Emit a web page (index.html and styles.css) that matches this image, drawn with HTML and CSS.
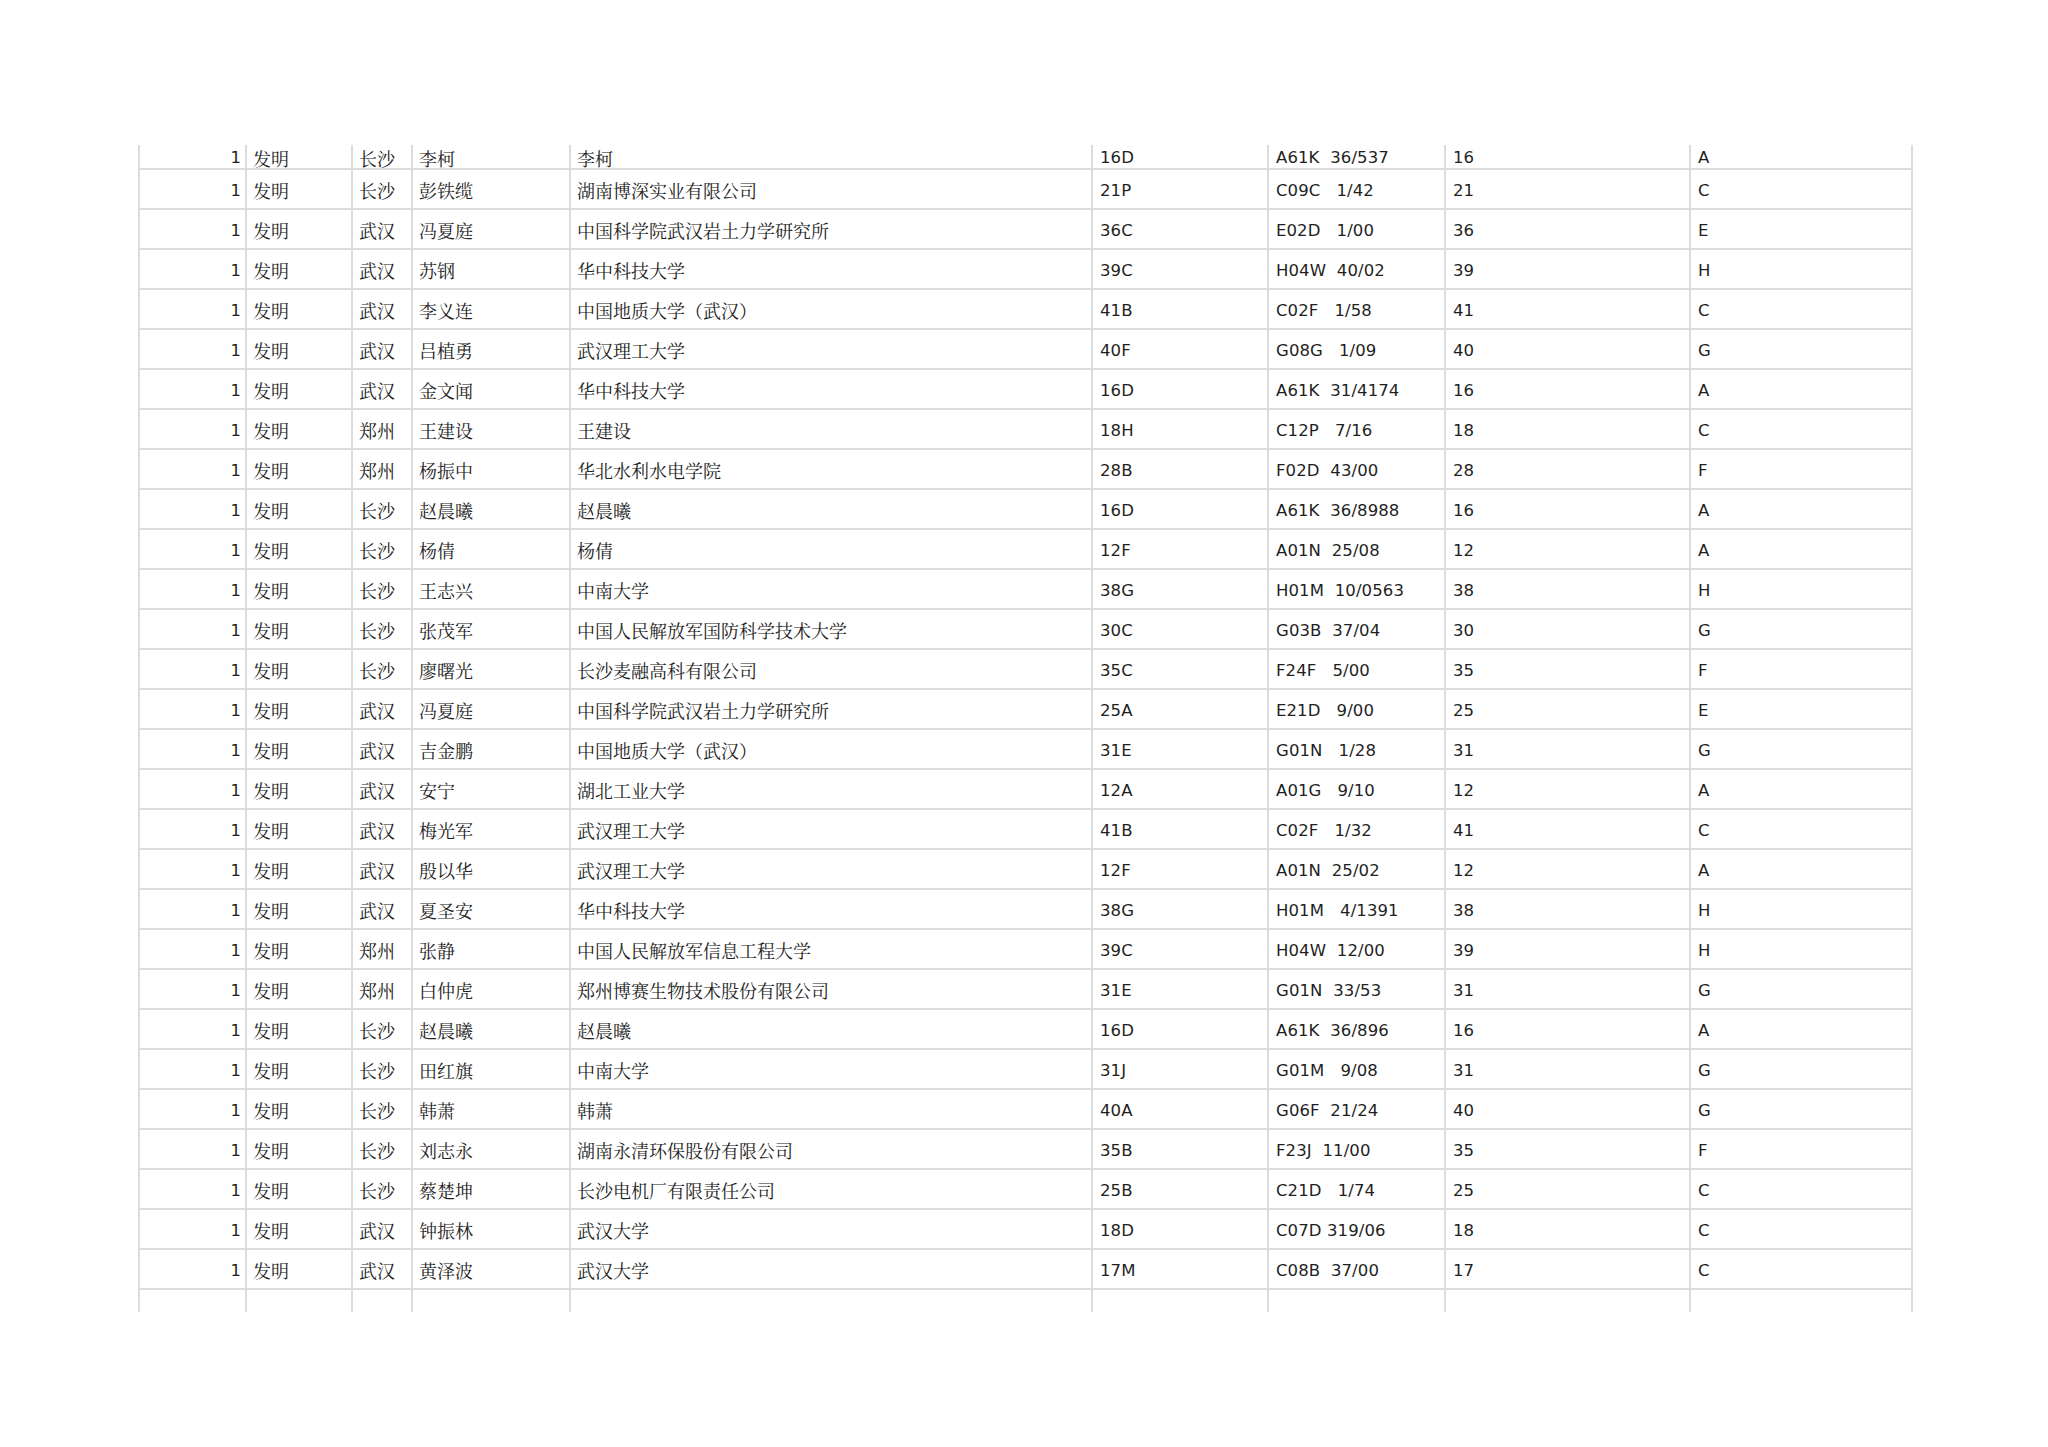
FILE: index.html
```html
<!DOCTYPE html>
<html lang="zh-CN">
<head>
<meta charset="utf-8">
<title>专利列表</title>
<link rel="stylesheet" href="styles.css">
</head>
<body>
<div class="page">
  <div class="sheet">
    <div class="row first"><div class="c num">1</div><div class="c zh">发明</div><div class="c zh">长沙</div><div class="c zh">李柯</div><div class="c zh">李柯</div><div class="c">16D</div><div class="c ipc">A61K  36/537</div><div class="c">16</div><div class="c">A</div></div>
    <div class="row"><div class="c num">1</div><div class="c zh">发明</div><div class="c zh">长沙</div><div class="c zh">彭铁缆</div><div class="c zh">湖南博深实业有限公司</div><div class="c">21P</div><div class="c ipc">C09C   1/42</div><div class="c">21</div><div class="c">C</div></div>
    <div class="row"><div class="c num">1</div><div class="c zh">发明</div><div class="c zh">武汉</div><div class="c zh">冯夏庭</div><div class="c zh">中国科学院武汉岩土力学研究所</div><div class="c">36C</div><div class="c ipc">E02D   1/00</div><div class="c">36</div><div class="c">E</div></div>
    <div class="row"><div class="c num">1</div><div class="c zh">发明</div><div class="c zh">武汉</div><div class="c zh">苏钢</div><div class="c zh">华中科技大学</div><div class="c">39C</div><div class="c ipc">H04W  40/02</div><div class="c">39</div><div class="c">H</div></div>
    <div class="row"><div class="c num">1</div><div class="c zh">发明</div><div class="c zh">武汉</div><div class="c zh">李义连</div><div class="c zh">中国地质大学（武汉）</div><div class="c">41B</div><div class="c ipc">C02F   1/58</div><div class="c">41</div><div class="c">C</div></div>
    <div class="row"><div class="c num">1</div><div class="c zh">发明</div><div class="c zh">武汉</div><div class="c zh">吕植勇</div><div class="c zh">武汉理工大学</div><div class="c">40F</div><div class="c ipc">G08G   1/09</div><div class="c">40</div><div class="c">G</div></div>
    <div class="row"><div class="c num">1</div><div class="c zh">发明</div><div class="c zh">武汉</div><div class="c zh">金文闻</div><div class="c zh">华中科技大学</div><div class="c">16D</div><div class="c ipc">A61K  31/4174</div><div class="c">16</div><div class="c">A</div></div>
    <div class="row"><div class="c num">1</div><div class="c zh">发明</div><div class="c zh">郑州</div><div class="c zh">王建设</div><div class="c zh">王建设</div><div class="c">18H</div><div class="c ipc">C12P   7/16</div><div class="c">18</div><div class="c">C</div></div>
    <div class="row"><div class="c num">1</div><div class="c zh">发明</div><div class="c zh">郑州</div><div class="c zh">杨振中</div><div class="c zh">华北水利水电学院</div><div class="c">28B</div><div class="c ipc">F02D  43/00</div><div class="c">28</div><div class="c">F</div></div>
    <div class="row"><div class="c num">1</div><div class="c zh">发明</div><div class="c zh">长沙</div><div class="c zh">赵晨曦</div><div class="c zh">赵晨曦</div><div class="c">16D</div><div class="c ipc">A61K  36/8988</div><div class="c">16</div><div class="c">A</div></div>
    <div class="row"><div class="c num">1</div><div class="c zh">发明</div><div class="c zh">长沙</div><div class="c zh">杨倩</div><div class="c zh">杨倩</div><div class="c">12F</div><div class="c ipc">A01N  25/08</div><div class="c">12</div><div class="c">A</div></div>
    <div class="row"><div class="c num">1</div><div class="c zh">发明</div><div class="c zh">长沙</div><div class="c zh">王志兴</div><div class="c zh">中南大学</div><div class="c">38G</div><div class="c ipc">H01M  10/0563</div><div class="c">38</div><div class="c">H</div></div>
    <div class="row"><div class="c num">1</div><div class="c zh">发明</div><div class="c zh">长沙</div><div class="c zh">张茂军</div><div class="c zh">中国人民解放军国防科学技术大学</div><div class="c">30C</div><div class="c ipc">G03B  37/04</div><div class="c">30</div><div class="c">G</div></div>
    <div class="row"><div class="c num">1</div><div class="c zh">发明</div><div class="c zh">长沙</div><div class="c zh">廖曙光</div><div class="c zh">长沙麦融高科有限公司</div><div class="c">35C</div><div class="c ipc">F24F   5/00</div><div class="c">35</div><div class="c">F</div></div>
    <div class="row"><div class="c num">1</div><div class="c zh">发明</div><div class="c zh">武汉</div><div class="c zh">冯夏庭</div><div class="c zh">中国科学院武汉岩土力学研究所</div><div class="c">25A</div><div class="c ipc">E21D   9/00</div><div class="c">25</div><div class="c">E</div></div>
    <div class="row"><div class="c num">1</div><div class="c zh">发明</div><div class="c zh">武汉</div><div class="c zh">吉金鹏</div><div class="c zh">中国地质大学（武汉）</div><div class="c">31E</div><div class="c ipc">G01N   1/28</div><div class="c">31</div><div class="c">G</div></div>
    <div class="row"><div class="c num">1</div><div class="c zh">发明</div><div class="c zh">武汉</div><div class="c zh">安宁</div><div class="c zh">湖北工业大学</div><div class="c">12A</div><div class="c ipc">A01G   9/10</div><div class="c">12</div><div class="c">A</div></div>
    <div class="row"><div class="c num">1</div><div class="c zh">发明</div><div class="c zh">武汉</div><div class="c zh">梅光军</div><div class="c zh">武汉理工大学</div><div class="c">41B</div><div class="c ipc">C02F   1/32</div><div class="c">41</div><div class="c">C</div></div>
    <div class="row"><div class="c num">1</div><div class="c zh">发明</div><div class="c zh">武汉</div><div class="c zh">殷以华</div><div class="c zh">武汉理工大学</div><div class="c">12F</div><div class="c ipc">A01N  25/02</div><div class="c">12</div><div class="c">A</div></div>
    <div class="row"><div class="c num">1</div><div class="c zh">发明</div><div class="c zh">武汉</div><div class="c zh">夏圣安</div><div class="c zh">华中科技大学</div><div class="c">38G</div><div class="c ipc">H01M   4/1391</div><div class="c">38</div><div class="c">H</div></div>
    <div class="row"><div class="c num">1</div><div class="c zh">发明</div><div class="c zh">郑州</div><div class="c zh">张静</div><div class="c zh">中国人民解放军信息工程大学</div><div class="c">39C</div><div class="c ipc">H04W  12/00</div><div class="c">39</div><div class="c">H</div></div>
    <div class="row"><div class="c num">1</div><div class="c zh">发明</div><div class="c zh">郑州</div><div class="c zh">白仲虎</div><div class="c zh">郑州博赛生物技术股份有限公司</div><div class="c">31E</div><div class="c ipc">G01N  33/53</div><div class="c">31</div><div class="c">G</div></div>
    <div class="row"><div class="c num">1</div><div class="c zh">发明</div><div class="c zh">长沙</div><div class="c zh">赵晨曦</div><div class="c zh">赵晨曦</div><div class="c">16D</div><div class="c ipc">A61K  36/896</div><div class="c">16</div><div class="c">A</div></div>
    <div class="row"><div class="c num">1</div><div class="c zh">发明</div><div class="c zh">长沙</div><div class="c zh">田红旗</div><div class="c zh">中南大学</div><div class="c">31J</div><div class="c ipc">G01M   9/08</div><div class="c">31</div><div class="c">G</div></div>
    <div class="row"><div class="c num">1</div><div class="c zh">发明</div><div class="c zh">长沙</div><div class="c zh">韩萧</div><div class="c zh">韩萧</div><div class="c">40A</div><div class="c ipc">G06F  21/24</div><div class="c">40</div><div class="c">G</div></div>
    <div class="row"><div class="c num">1</div><div class="c zh">发明</div><div class="c zh">长沙</div><div class="c zh">刘志永</div><div class="c zh">湖南永清环保股份有限公司</div><div class="c">35B</div><div class="c ipc">F23J  11/00</div><div class="c">35</div><div class="c">F</div></div>
    <div class="row"><div class="c num">1</div><div class="c zh">发明</div><div class="c zh">长沙</div><div class="c zh">蔡楚坤</div><div class="c zh">长沙电机厂有限责任公司</div><div class="c">25B</div><div class="c ipc">C21D   1/74</div><div class="c">25</div><div class="c">C</div></div>
    <div class="row"><div class="c num">1</div><div class="c zh">发明</div><div class="c zh">武汉</div><div class="c zh">钟振林</div><div class="c zh">武汉大学</div><div class="c">18D</div><div class="c ipc">C07D 319/06</div><div class="c">18</div><div class="c">C</div></div>
    <div class="row"><div class="c num">1</div><div class="c zh">发明</div><div class="c zh">武汉</div><div class="c zh">黄泽波</div><div class="c zh">武汉大学</div><div class="c">17M</div><div class="c ipc">C08B  37/00</div><div class="c">17</div><div class="c">C</div></div>
    <div class="row last"><div class="c num"></div><div class="c"></div><div class="c"></div><div class="c"></div><div class="c"></div><div class="c"></div><div class="c"></div><div class="c"></div><div class="c"></div></div>
  </div>
</div>
</body>
</html>
```

FILE: styles.css
```css
html, body {
  margin: 0;
  padding: 0;
  background: #ffffff;
}

.page {
  width: 2048px;
  height: 1447px;
  box-sizing: border-box;
  padding: 145px 0 0 138px;
  background: #ffffff;
}

.sheet {
  width: 1776px;
  border-left: 2px solid #dcdcdc;
  box-sizing: border-box;
  font-family: "DejaVu Sans", Verdana, "Noto Sans CJK SC", sans-serif;
  font-size: 16.5px;
  letter-spacing: 0.1px;
  color: #1f1f1f;
}

.row {
  display: grid;
  grid-template-columns: 107px 106px 60px 158px 522px 176px 177px 245px 222px;
  height: 40px;
}

.row.first {
  height: 25px;
}

.row.last {
  height: 22px;
}

.c {
  display: flex;
  align-items: center;
  box-sizing: border-box;
  border-right: 2px solid #dcdcdc;
  border-bottom: 2px solid #dcdcdc;
  padding: 2px 0 0 7px;
  white-space: nowrap;
  overflow: hidden;
}

.row.last .c {
  border-bottom: none;
}

.c.num {
  justify-content: flex-end;
  padding: 2px 4px 0 0;
}

.c.zh {
  font-family: "Noto Serif CJK SC", "Noto Sans CJK SC", "DejaVu Sans", sans-serif;
  font-size: 18px;
  letter-spacing: 0;
  padding-left: 6px;
  color: #222222;
}

.c.ipc {
  white-space: pre;
}
```
